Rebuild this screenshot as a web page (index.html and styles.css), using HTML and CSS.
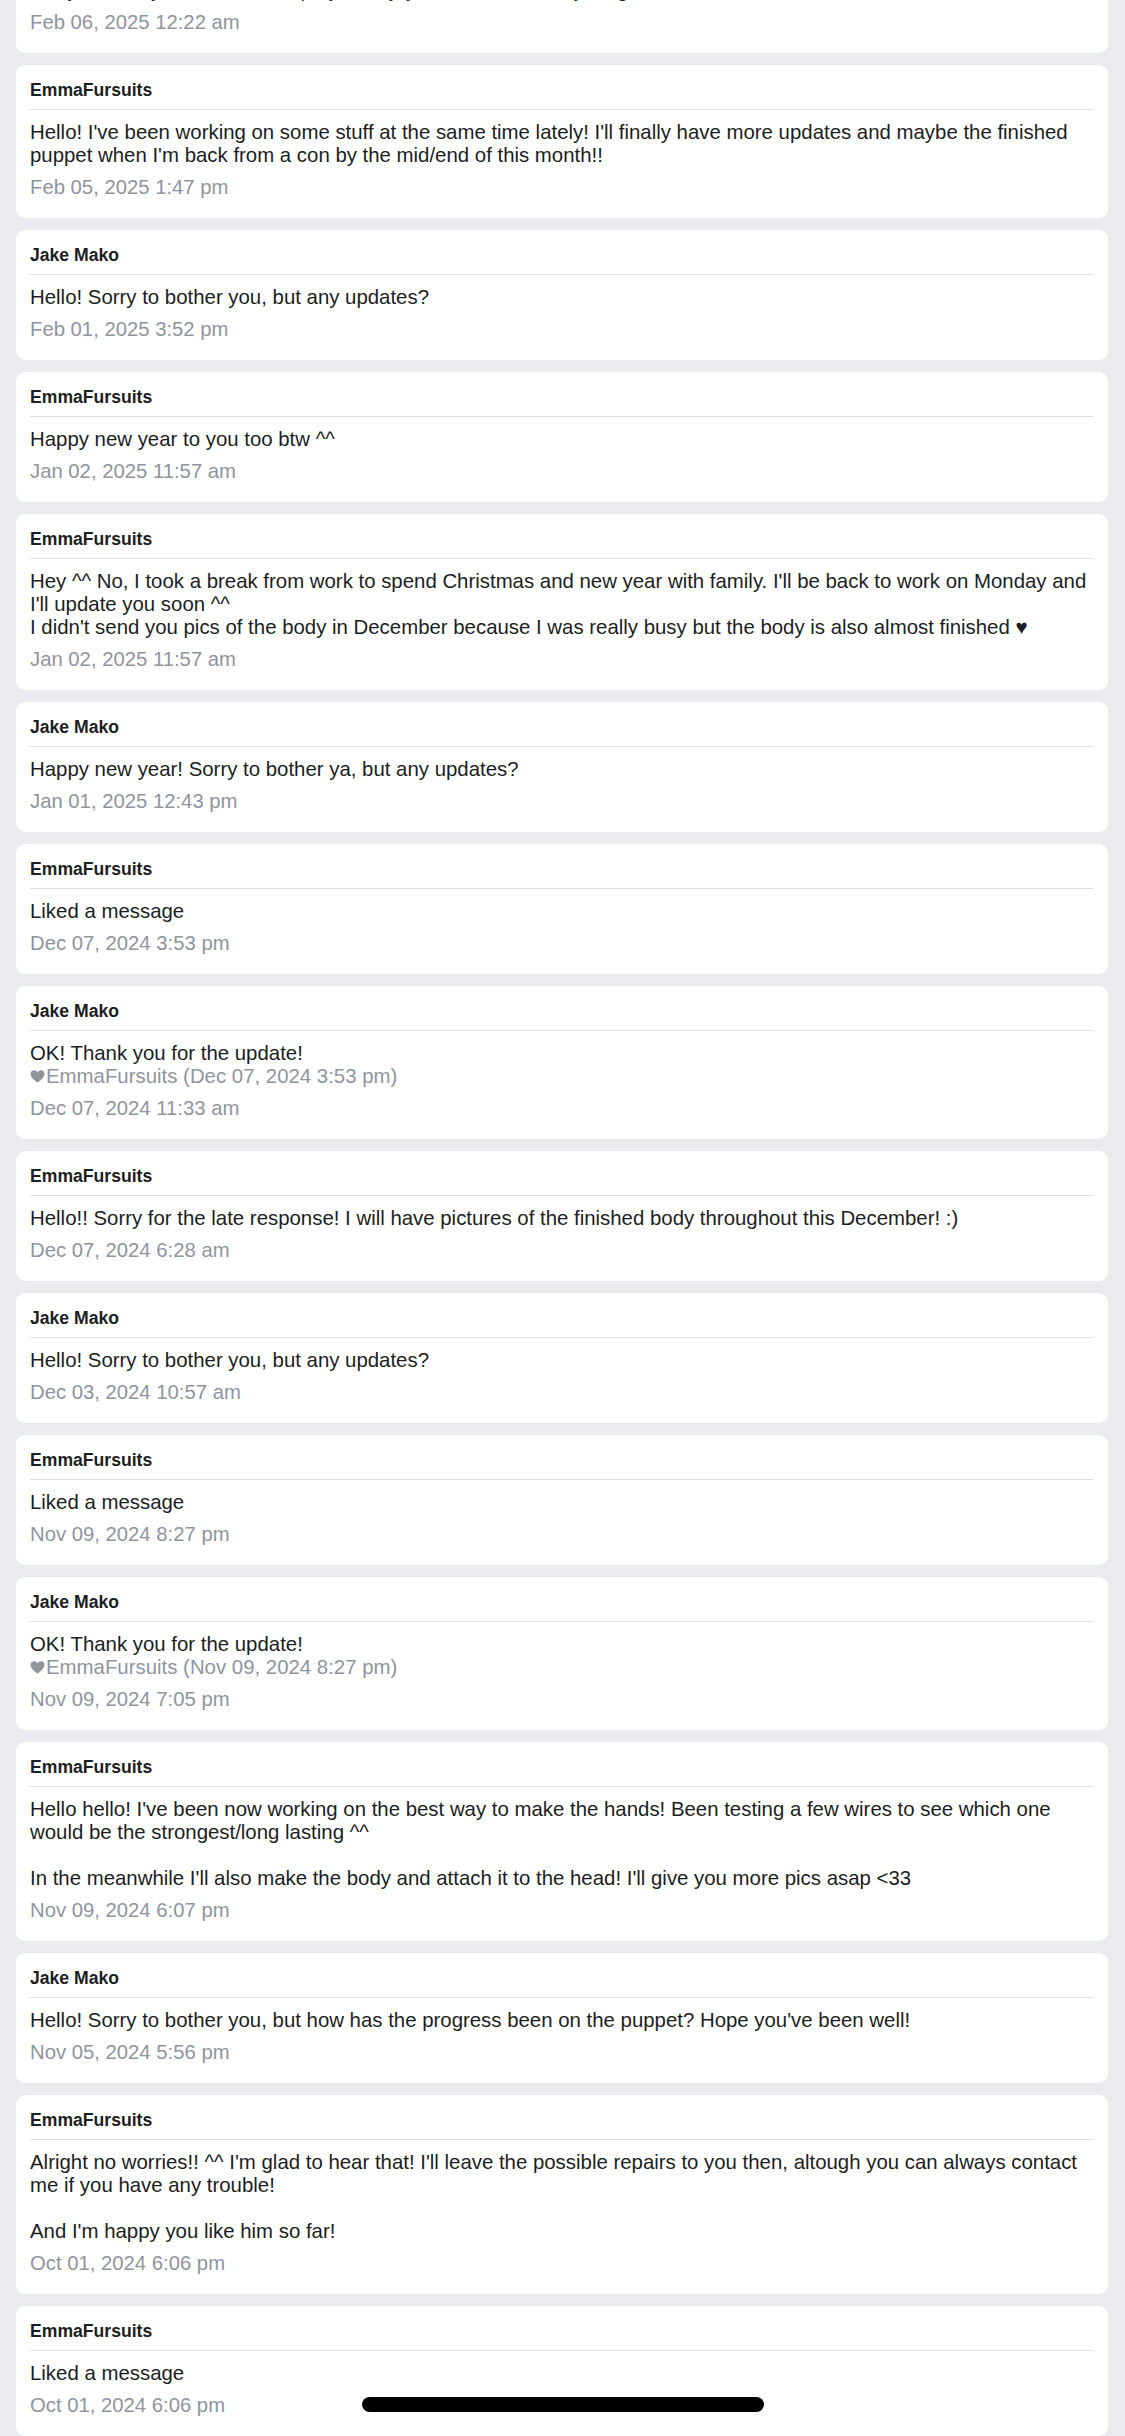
FILE: index.html
```html
<!DOCTYPE html>
<html lang="en">
<head>
<meta charset="utf-8">
<title>Messages</title>
<link rel="stylesheet" href="styles.css">
</head>
<body>
<div class="thread">
  <div class="msg">
    <div class="author">Jake Mako</div>
    <div class="text">Okay! Thank you so much, hope you enjoy the con and everything!</div>
    <div class="time">Feb 06, 2025 12:22 am</div>
  </div>
  <div class="msg">
    <div class="author">EmmaFursuits</div>
    <div class="text">Hello! I've been working on some stuff at the same time lately! I'll finally have more updates and maybe the finished puppet when I'm back from a con by the mid/end of this month!!</div>
    <div class="time">Feb 05, 2025 1:47 pm</div>
  </div>
  <div class="msg">
    <div class="author">Jake Mako</div>
    <div class="text">Hello! Sorry to bother you, but any updates?</div>
    <div class="time">Feb 01, 2025 3:52 pm</div>
  </div>
  <div class="msg">
    <div class="author">EmmaFursuits</div>
    <div class="text">Happy new year to you too btw ^^</div>
    <div class="time">Jan 02, 2025 11:57 am</div>
  </div>
  <div class="msg">
    <div class="author">EmmaFursuits</div>
    <div class="text">Hey ^^ No, I took a break from work to spend Christmas and new year with family. I'll be back to work on Monday and I'll update you soon ^^<br>I didn't send you pics of the body in December because I was really busy but the body is also almost finished &#9829;</div>
    <div class="time">Jan 02, 2025 11:57 am</div>
  </div>
  <div class="msg">
    <div class="author">Jake Mako</div>
    <div class="text">Happy new year! Sorry to bother ya, but any updates?</div>
    <div class="time">Jan 01, 2025 12:43 pm</div>
  </div>
  <div class="msg">
    <div class="author">EmmaFursuits</div>
    <div class="text">Liked a message</div>
    <div class="time">Dec 07, 2024 3:53 pm</div>
  </div>
  <div class="msg">
    <div class="author">Jake Mako</div>
    <div class="text">OK! Thank you for the update!<br><span class="like"><svg class="heart" viewBox="0 0 16 14" aria-hidden="true"><path d="M8 13.6C7.6 13.3 0.4 8.6 0.4 4.3 0.4 2 2.2 0.4 4.3 0.4 5.9 0.4 7.3 1.3 8 2.6 8.7 1.3 10.1 0.4 11.7 0.4 13.8 0.4 15.6 2 15.6 4.3 15.6 8.6 8.4 13.3 8 13.6Z"/></svg>EmmaFursuits (Dec 07, 2024 3:53 pm)</span></div>
    <div class="time">Dec 07, 2024 11:33 am</div>
  </div>
  <div class="msg">
    <div class="author">EmmaFursuits</div>
    <div class="text">Hello!! Sorry for the late response! I will have pictures of the finished body throughout this December! :)</div>
    <div class="time">Dec 07, 2024 6:28 am</div>
  </div>
  <div class="msg">
    <div class="author">Jake Mako</div>
    <div class="text">Hello! Sorry to bother you, but any updates?</div>
    <div class="time">Dec 03, 2024 10:57 am</div>
  </div>
  <div class="msg">
    <div class="author">EmmaFursuits</div>
    <div class="text">Liked a message</div>
    <div class="time">Nov 09, 2024 8:27 pm</div>
  </div>
  <div class="msg">
    <div class="author">Jake Mako</div>
    <div class="text">OK! Thank you for the update!<br><span class="like"><svg class="heart" viewBox="0 0 16 14" aria-hidden="true"><path d="M8 13.6C7.6 13.3 0.4 8.6 0.4 4.3 0.4 2 2.2 0.4 4.3 0.4 5.9 0.4 7.3 1.3 8 2.6 8.7 1.3 10.1 0.4 11.7 0.4 13.8 0.4 15.6 2 15.6 4.3 15.6 8.6 8.4 13.3 8 13.6Z"/></svg>EmmaFursuits (Nov 09, 2024 8:27 pm)</span></div>
    <div class="time">Nov 09, 2024 7:05 pm</div>
  </div>
  <div class="msg">
    <div class="author">EmmaFursuits</div>
    <div class="text">Hello hello! I've been now working on the best way to make the hands! Been testing a few wires to see which one would be the strongest/long lasting ^^<br><br>In the meanwhile I'll also make the body and attach it to the head! I'll give you more pics asap &lt;33</div>
    <div class="time">Nov 09, 2024 6:07 pm</div>
  </div>
  <div class="msg">
    <div class="author">Jake Mako</div>
    <div class="text">Hello! Sorry to bother you, but how has the progress been on the puppet? Hope you've been well!</div>
    <div class="time">Nov 05, 2024 5:56 pm</div>
  </div>
  <div class="msg">
    <div class="author">EmmaFursuits</div>
    <div class="text">Alright no worries!! ^^ I'm glad to hear that! I'll leave the possible repairs to you then, altough you can always contact me if you have any trouble!<br><br>And I'm happy you like him so far!</div>
    <div class="time">Oct 01, 2024 6:06 pm</div>
  </div>
  <div class="msg">
    <div class="author">EmmaFursuits</div>
    <div class="text">Liked a message</div>
    <div class="time">Oct 01, 2024 6:06 pm</div>
  </div>
</div>
<div class="home-indicator"></div>
</body>
</html>
```
FILE: styles.css
```css
html, body {
  margin: 0;
  padding: 0;
  background: #e9ebee;
  height: 2436px;
  overflow: hidden;
}

body {
  font-family: "Liberation Sans", Arial, Helvetica, sans-serif;
  color: #1c1e21;
}

.thread {
  display: flex;
  flex-direction: column;
  gap: 12px;
  padding: 0 17px 0 16px;
  margin-top: -77px;
}

.msg {
  background: #ffffff;
  border-radius: 9px;
  padding: 15px 14px 19px 14px;
}

.author {
  font-size: 17.6px;
  font-weight: bold;
  line-height: 20px;
  padding-bottom: 9px;
  border-bottom: 1px solid #dddfe2;
}

.text {
  margin-top: 11px;
  font-size: 20.4px;
  line-height: 23px;
}

.like {
  color: #90949c;
}

.heart {
  width: 15px;
  height: 13px;
  fill: #90949c;
  vertical-align: 0;
  margin-right: 1px;
}

.time {
  margin-top: 9px;
  font-size: 20.3px;
  line-height: 23px;
  color: #90949c;
}

.home-indicator {
  position: fixed;
  left: 50%;
  bottom: 24px;
  width: 402px;
  height: 15px;
  margin-left: -201px;
  border-radius: 8px;
  background: #000000;
}
```
